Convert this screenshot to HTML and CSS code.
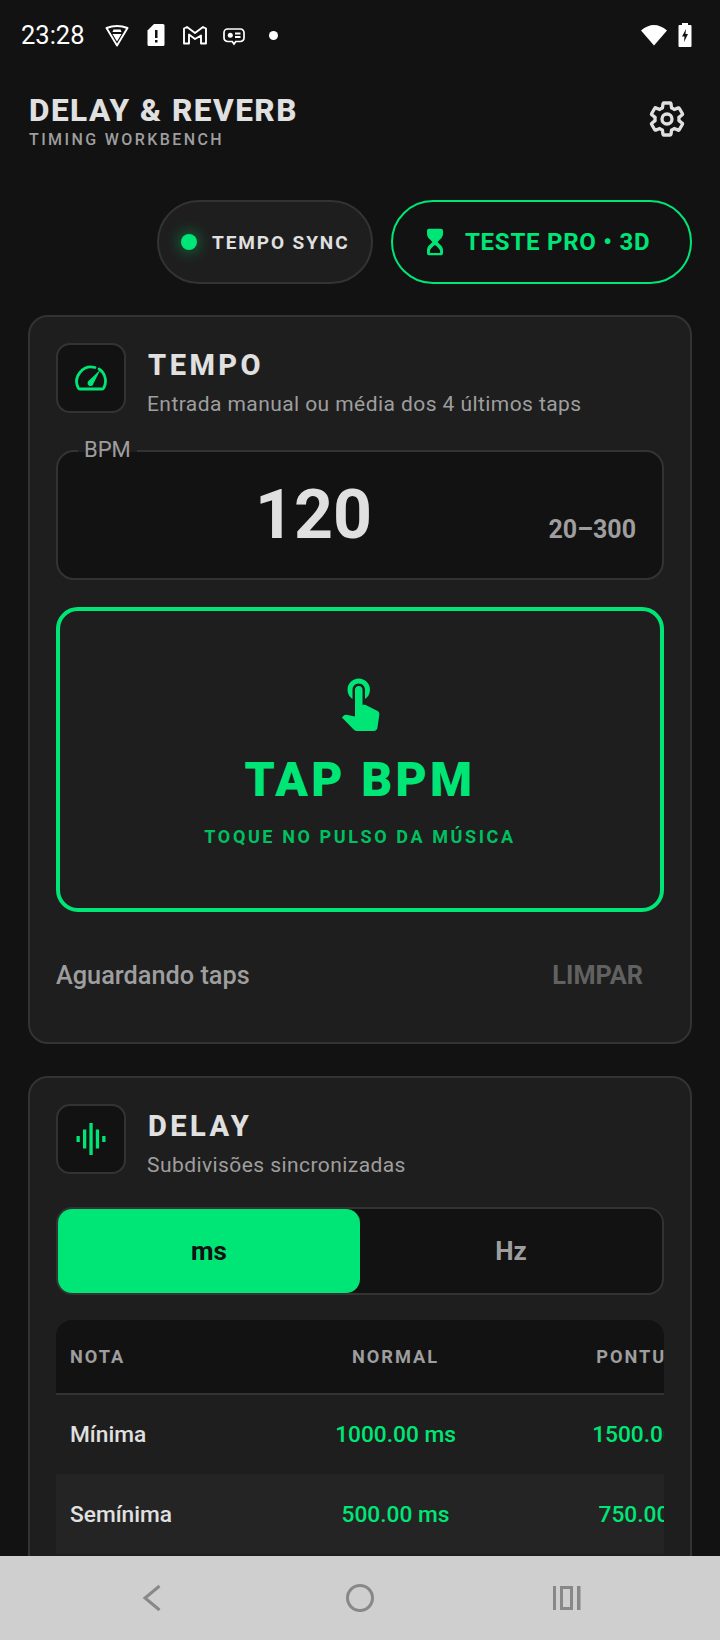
FILE: index.html
```html
<!DOCTYPE html>
<html lang="en">
<head>
    <meta charset="UTF-8">
    <meta name="viewport" content="width=device-width, initial-scale=1.0">
    <title>Delay &amp; Reverb</title>
    <link rel="stylesheet" href="styles.css">
</head>
<body>
    <div class="status-bar">
        <span class="clock">23:28</span>
        <div class="status-icons">
            <svg class="st-icon" viewBox="0 0 24 24"><path d="M1.500 5 Q12 1 22.500 5 L12 22.500 Z" fill="none" stroke="#fff" stroke-width="1.900" stroke-linejoin="round"/><path d="M8.500 6.500h7l1 2.500h-9zM7.500 11h9l-4.500 7.500z" fill="#fff"/></svg>
            <svg class="st-icon" viewBox="0 0 24 24"><path d="M10 1h9a1.500 1.500 0 0 1 1.500 1.500v19a1.500 1.500 0 0 1-1.500 1.500H5a1.500 1.500 0 0 1-1.500-1.500V7.500z" fill="#fff"/><path d="M11 7h2.500v8H11zM11 17h2.500v2.500H11z" fill="#111"/></svg>
            <svg class="st-icon" viewBox="0 0 24 24"><path d="M1 20.500V5.500l3-1.500L12 10l8-6 3 1.500v15h-5v-8L12 16l-6-4.500v9z" fill="none" stroke="#fff" stroke-width="1.900" stroke-linejoin="round"/></svg>
            <svg class="st-icon" viewBox="0 0 24 24"><path d="M5.500 6h13A3.500 3.500 0 0 1 22 9.500v5.500a3.500 3.500 0 0 1-3.500 3.500h-4.700L12 21 10.200 18.500H5.500A3.500 3.500 0 0 1 2 15V9.500A3.500 3.500 0 0 1 5.500 6z" fill="none" stroke="#fff" stroke-width="1.700"/><circle cx="8.300" cy="12.300" r="2.500" fill="#fff"/><path d="M13 9.500h5.500v2H13zM13 13h5.500v2H13z" fill="#fff"/></svg>
            <span class="st-dot"></span>
        </div>
        <div class="status-right">
            <svg class="wifi" viewBox="0 0 26 22"><path d="M0 6.500 Q13 -4.500 26 6.500 L13 21.500 Z" fill="#fff"/></svg>
            <svg class="battery" viewBox="0 0 14 24"><path d="M4 0h6v2h2.500a1 1 0 0 1 1 1v20a1 1 0 0 1-1 1h-11a1 1 0 0 1-1-1V3a1 1 0 0 1 1-1H4z" fill="#fff"/><path d="M8 6 4 13.500h2.500L6 19l4-8H7.500z" fill="#111"/></svg>
        </div>
    </div>

    <main class="screen">
        <header class="app-header">
            <div>
                <h1>DELAY &amp; REVERB</h1>
                <p>TIMING WORKBENCH</p>
            </div>
            <svg class="gear" viewBox="0 0 24 24"><path d="M19.140 12.940c.04-.3.06-.61.06-.94 0-.32-.02-.64-.07-.94l2.030-1.580c.18-.14.23-.41.12-.61l-1.920-3.320c-.12-.22-.37-.29-.59-.22l-2.390.96c-.5-.38-1.030-.7-1.620-.94l-.36-2.540c-.04-.24-.24-.41-.48-.41h-3.840c-.24 0-.43.17-.47.41l-.36 2.540c-.59.24-1.130.57-1.620.94l-2.390-.96c-.22-.08-.47 0-.59.22L2.740 8.870c-.12.21-.08.47.12.61l2.030 1.580c-.05.3-.09.63-.09.94s.02.64.07.94l-2.030 1.580c-.18.14-.23.41-.12.61l1.920 3.320c.12.22.37.29.59.22l2.390-.96c.5.38 1.030.7 1.620.94l.36 2.540c.05.24.24.41.48.41h3.840c.24 0 .44-.17.47-.41l.36-2.540c.59-.24 1.130-.56 1.620-.94l2.390.96c.22.08.47 0 .59-.22l1.920-3.320c.12-.22.07-.47-.12-.61z" fill="none" stroke="#e0e0e0" stroke-width="2" stroke-linejoin="round"/><circle cx="12" cy="12" r="3" fill="none" stroke="#e0e0e0" stroke-width="2"/></svg>
        </header>

        <div class="pill-row">
            <div class="pill pill-sync"><span class="led"></span>TEMPO SYNC</div>
            <div class="pill pill-pro">
                <svg class="hourglass" viewBox="0 0 24 24"><path fill-rule="evenodd" d="M7.500 2h9a1.500 1.500 0 0 1 1.500 1.500V6c0 2.800-3 4.500-4 6 1 1.500 4 3.200 4 6v2.500a1.500 1.500 0 0 1-1.500 1.500h-9A1.500 1.500 0 0 1 6 20.500V18c0-2.800 3-4.500 4-6-1-1.500-4-3.200-4-6V3.500A1.500 1.500 0 0 1 7.500 2zM12 14c-1 1.300-3.800 2.800-3.800 5v1.200h7.600V19c0-2.200-2.800-3.700-3.800-5z" fill="#00e676"/></svg>
                TESTE PRO • 3D
            </div>
        </div>

        <section class="card card-tempo">
            <div class="card-head">
                <div class="icon-box">
                    <svg viewBox="0 0 36 36"><path d="M7 29h22a2 2 0 0 0 1.800-1.100A14.500 14.500 0 0 0 26 9M22 7.500A14.500 14.500 0 0 0 5.200 27.900 2 2 0 0 0 7 29" fill="none" stroke="#00e676" stroke-width="2.800" stroke-linecap="round"/><path d="M27.500 9.500 20.500 23.500a3 3 0 1 1-4.500-3z" fill="#00e676"/></svg>
                </div>
                <div>
                    <h2>TEMPO</h2>
                    <p>Entrada manual ou média dos 4 últimos taps</p>
                </div>
            </div>

            <div class="bpm-box">
                <span class="bpm-label">BPM</span>
                <span class="bpm-value">120</span>
                <span class="bpm-range">20–300</span>
            </div>

            <div class="tap-box">
                <svg class="tap-icon" viewBox="0 0 24 24"><path d="M9 11.240V7.500C9 6.120 10.120 5 11.500 5S14 6.120 14 7.500v3.740c1.210-.81 2-2.180 2-3.740C16 5.010 13.990 3 11.500 3S7 5.010 7 7.500c0 1.560.79 2.930 2 3.740zm9.840 4.630l-4.540-2.260c-.17-.07-.35-.11-.54-.11H13v-6c0-.83-.67-1.500-1.500-1.500S10 6.670 10 7.500v10.740l-3.430-.72c-.08-.01-.15-.03-.24-.03-.31 0-.59.13-.79.33l-.79.8 4.940 4.940c.27.27.65.44 1.060.44h6.790c.75 0 1.330-.55 1.440-1.280l.75-5.270c.01-.07.02-.14.02-.2 0-.62-.38-1.160-.91-1.380z" fill="#00e676"/></svg>
                <div class="tap-title">TAP BPM</div>
                <div class="tap-sub">TOQUE NO PULSO DA MÚSICA</div>
            </div>

            <div class="tap-status">
                <span>Aguardando taps</span>
                <span class="clear-btn">LIMPAR</span>
            </div>
        </section>

        <section class="card">
            <div class="card-head">
                <div class="icon-box">
                    <svg viewBox="0 0 36 36"><path d="M3.500 15h3.300v6H3.500zM10 8.500h3.300v19H10zM16.400 2h3.300v32h-3.300zM22.800 8.500h3.300v19h-3.300zM29.200 15h3.300v6h-3.300z" fill="#00e676"/></svg>
                </div>
                <div>
                    <h2>DELAY</h2>
                    <p>Subdivisões sincronizadas</p>
                </div>
            </div>

            <div class="segment">
                <div class="seg-item seg-active">ms</div>
                <div class="seg-item">Hz</div>
            </div>

            <div class="table-wrap">
                <table class="delay-table">
                    <thead>
                        <tr><th class="col-note">NOTA</th><th>NORMAL</th><th>PONTUADO</th></tr>
                    </thead>
                    <tbody>
                        <tr><td class="col-note">Mínima</td><td>1000.00 ms</td><td>1500.00 ms</td></tr>
                        <tr><td class="col-note">Semínima</td><td>500.00 ms</td><td>750.00 ms</td></tr>
                        <tr><td class="col-note">Colcheia</td><td>250.00 ms</td><td>375.00 ms</td></tr>
                    </tbody>
                </table>
            </div>
        </section>
    </main>

    <nav class="nav-bar">
        <svg viewBox="0 0 32 32"><path d="M23.500 4 9 16l14.500 12" fill="none" stroke="#888" stroke-width="3"/></svg>
        <svg viewBox="0 0 32 32"><circle cx="16" cy="16" r="12.500" fill="none" stroke="#888" stroke-width="3"/></svg>
        <svg viewBox="0 0 32 32"><path d="M1 4h3v24H1zM25 4h3.500v24H25z" fill="#888"/><rect x="9.500" y="5.500" width="10" height="21" fill="none" stroke="#888" stroke-width="3"/></svg>
    </nav>
</body>
</html>
```

FILE: styles.css
```css
* {
    box-sizing: border-box;
}
body {
    background-color: #121212;
    color: #e0e0e0;
    font-family: Roboto, sans-serif;
    margin: 0;
    width: 720px;
    height: 1640px;
    overflow: hidden;
    display: flex;
    flex-direction: column;
}
h1, h2, p {
    margin: 0;
}

/* status bar */
.status-bar {
    flex: none;
    height: 70px;
    padding: 0 21px;
    display: flex;
    align-items: center;
    color: #fff;
}
.clock {
    font-size: 25.5px;
    width: 84px;
}
.status-icons {
    display: flex;
    align-items: center;
    gap: 15px;
}
.st-icon {
    width: 24px;
    height: 24px;
}
.st-dot {
    width: 9px;
    height: 9px;
    margin-left: 8px;
    border-radius: 50%;
    background-color: #fff;
}
.status-right {
    margin-left: auto;
    display: flex;
    align-items: center;
    gap: 11px;
    padding-right: 7px;
}
.wifi {
    width: 26px;
    height: 22px;
}
.battery {
    width: 14px;
    height: 24px;
}

/* main */
.screen {
    flex: 1;
    min-height: 0;
    overflow: hidden;
    padding: 0 28px;
}
.app-header {
    display: flex;
    justify-content: space-between;
    align-items: flex-start;
    padding: 26px 0 0 1px;
    height: 82px;
}
.app-header h1 {
    font-size: 31.5px;
    font-weight: 800;
    letter-spacing: 1.5px;
    line-height: 30px;
}
.app-header p {
    font-size: 16px;
    font-weight: 500;
    letter-spacing: 2.4px;
    line-height: 18px;
    margin-top: 5px;
    color: #9e9e9e;
}
.gear {
    width: 40px;
    height: 40px;
    margin: 3px 5px 0 0;
}
.pill-row {
    display: flex;
    justify-content: flex-end;
    gap: 18px;
    margin-top: 48px;
}
.pill {
    height: 84px;
    border-radius: 42px;
    display: flex;
    align-items: center;
}
.pill-sync {
    width: 216px;
    padding-left: 22px;
    background-color: #1e1e1e;
    border: 2px solid #333;
    font-size: 19px;
    font-weight: 700;
    letter-spacing: 1.9px;
}
.led {
    width: 16px;
    height: 16px;
    margin-right: 15px;
    border-radius: 50%;
    background-color: #00e676;
    box-shadow: 0 0 16px rgba(0, 230, 118, 0.6);
}
.pill-pro {
    width: 301px;
    padding-left: 26px;
    border: 2px solid #00e676;
    color: #00e676;
    font-size: 24px;
    font-weight: 700;
    letter-spacing: 0.75px;
}
.hourglass {
    width: 32px;
    height: 32px;
    margin-right: 14px;
}

/* cards */
.card {
    background-color: #1e1e1e;
    border: 2px solid #333;
    border-radius: 20px;
    padding: 26px;
    margin-top: 31px;
}
.card-tempo {
    height: 729px;
}
.card + .card {
    margin-top: 32px;
}
.card-head {
    display: flex;
    gap: 22px;
    height: 69px;
}
.icon-box {
    flex: none;
    width: 70px;
    height: 70px;
    background-color: #121212;
    border: 2px solid #333;
    border-radius: 14px;
    display: flex;
    align-items: center;
    justify-content: center;
}
.icon-box svg {
    width: 36px;
    height: 36px;
}
.card-head h2 {
    font-size: 29px;
    font-weight: 800;
    letter-spacing: 3.5px;
    line-height: 44px;
}
.card-head p {
    font-size: 21px;
    letter-spacing: 0.43px;
    line-height: 30px;
    margin-top: 2px;
    margin-left: -1px;
    color: #9e9e9e;
}

/* bpm input */
.bpm-box {
    position: relative;
    height: 130px;
    margin-top: 38px;
    background-color: #121212;
    border: 2px solid #333;
    border-radius: 18px;
    display: flex;
    align-items: center;
    justify-content: center;
    padding-right: 93px;
}
.bpm-label {
    position: absolute;
    left: 20px;
    top: -14px;
    padding: 0 6px;
    background: linear-gradient(#1e1e1e 14px, #121212 14px); /* notch in the border only */
    font-size: 22px;
    line-height: 24px;
    color: #9e9e9e;
}
.bpm-value {
    font-size: 68px;
    font-weight: 700;
    line-height: 1;
}
.bpm-range {
    position: absolute;
    right: 26px;
    top: 64px;
    font-size: 25px;
    font-weight: 700;
    line-height: 28px;
    color: #9e9e9e;
}

/* tap area */
.tap-box {
    height: 305px;
    margin-top: 27px;
    border: 4px solid #00e676;
    border-radius: 22px;
    display: flex;
    flex-direction: column;
    align-items: center;
    padding-top: 60px;
}
.tap-icon {
    width: 60px;
    height: 60px;
}
.tap-title {
    font-size: 48px;
    font-weight: 900;
    letter-spacing: 3.3px;
    line-height: 56px;
    margin-top: 21px;
    color: #00e676;
}
.tap-sub {
    font-size: 18px;
    font-weight: 700;
    letter-spacing: 2.6px;
    line-height: 22px;
    margin-top: 18px;
    color: #00c060;
}
.tap-status {
    display: flex;
    justify-content: space-between;
    margin-top: 47px;
    padding-right: 21px;
    font-size: 25.3px;
    font-weight: 500;
    line-height: 34px;
    color: #9e9e9e;
}
.clear-btn {
    font-weight: 700;
    color: #616161;
}

/* ms / hz switch */
.segment {
    display: flex;
    height: 88px;
    margin-top: 34px;
    background-color: #121212;
    border: 2px solid #333;
    border-radius: 16px;
}
.seg-item {
    flex: 1;
    display: flex;
    align-items: center;
    justify-content: center;
    font-size: 26px;
    font-weight: 700;
    color: #9e9e9e;
}
.seg-active {
    background-color: #00e676;
    border-radius: 14px;
    color: #121212;
}

/* table */
.table-wrap {
    margin-top: 25px;
    overflow: hidden;
    border-radius: 16px 16px 0 0;
}
.delay-table {
    border-collapse: collapse;
    table-layout: fixed;
    width: 725px;
}
.delay-table th {
    height: 74px;
    background-color: #121212;
    border-bottom: 2px solid #333;
    font-size: 18.2px;
    font-weight: 700;
    letter-spacing: 2px;
    color: #9e9e9e;
}
.delay-table td {
    height: 80px;
    font-size: 22.7px;
    font-weight: 500;
    text-align: center;
    color: #00e676;
}
.delay-table tr:nth-child(even) td {
    background-color: #242424;
}
.delay-table .col-note {
    width: 211px;
    padding-left: 14px;
    text-align: left;
}
.delay-table td.col-note {
    color: #e0e0e0;
}

/* navigation */
.nav-bar {
    flex: none;
    height: 84px;
    background-color: #cfcfcf;
    display: flex;
    justify-content: center;
    gap: 176px;
    align-items: center;
}
.nav-bar svg {
    width: 32px;
    height: 32px;
}
```
